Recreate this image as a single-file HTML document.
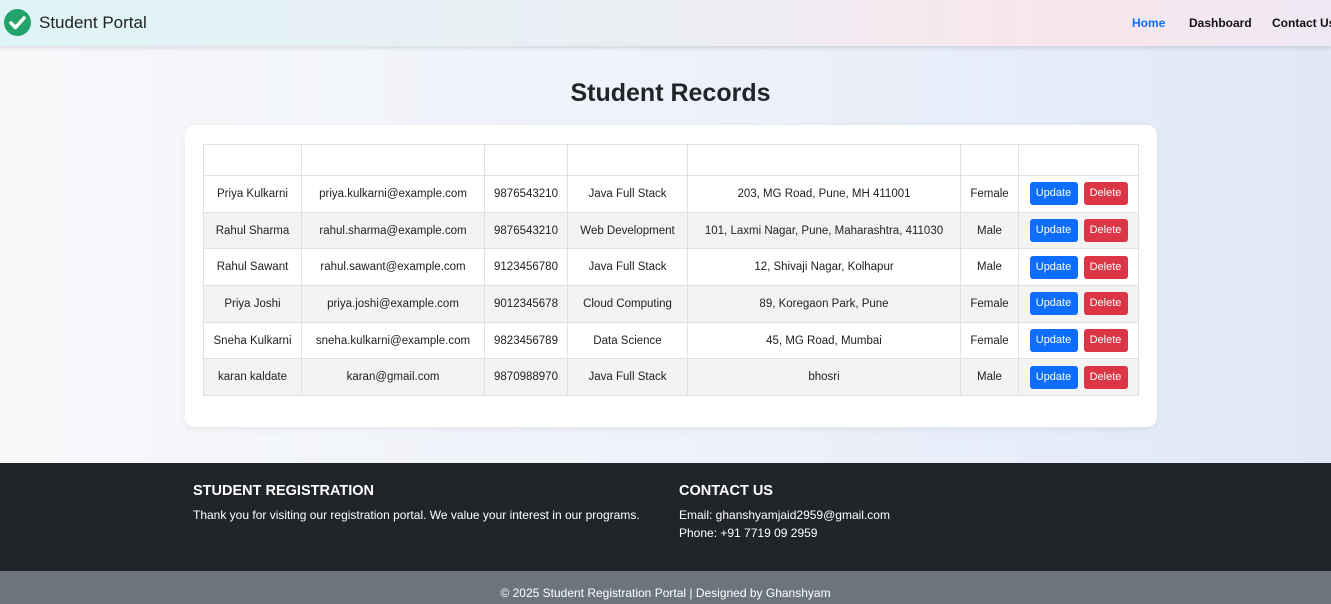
<!DOCTYPE html>
<html><head><style>
*{margin:0;padding:0;box-sizing:border-box}
body{width:1331px;height:604px;overflow:hidden;font-family:"Liberation Sans",sans-serif;background:linear-gradient(90deg,#f7f8fa 0%,#eef2fa 50%,#e0e8f8 100%);position:relative;color:#212529}
.nav{position:absolute;left:0;top:0;width:1331px;height:46px;background:linear-gradient(90deg,#e0f4f7 0%,#ebeef3 50%,#f9e6ec 80%,#efe8f4 100%);box-shadow:0 2px 4px rgba(0,0,0,.12)}
.logo{position:absolute;left:4px;top:9px;width:27px;height:27px;border-radius:50%;background:#22a36a}
.brand{position:absolute;left:39px;top:13px;font-size:17px;color:#222}
.nl{position:absolute;top:16px;font-size:12px;font-weight:bold;color:#111;white-space:nowrap}
h1{position:absolute;left:0;width:1341px;text-align:center;top:79px;font-size:25px;font-weight:bold;color:#212529}
.card{position:absolute;left:185px;top:125px;width:972px;height:302px;background:#fff;border-radius:10px;box-shadow:0 2px 8px rgba(0,0,0,.06)}
table{position:absolute;left:203px;top:144px;border-collapse:collapse;font-size:11.5px;table-layout:fixed;width:935px}
td{border:1px solid #dee2e6;text-align:center;color:#222;padding:0;white-space:nowrap}
tr{height:36.7px}
tr.h{height:31px}
tr.g td{background:#f3f3f3}
.b{display:inline-block;color:#fff;font-size:11px;border-radius:3px;padding:5px 0;width:48px;line-height:13px}
.u{background:#0d6efd}.d{background:#dc3545;width:44px;margin-left:6px}
.foot{position:absolute;left:0;top:463px;width:1331px;height:108px;background:#212529;color:#fff}
.foot h5{position:absolute;font-size:14.5px;font-weight:bold;top:20px}
.foot p{position:absolute;font-size:12px;line-height:18px}
.copy{position:absolute;left:0;top:571px;width:1331px;height:33px;background:#6c757d;color:#fff;font-size:12px;text-align:center;padding-top:15px}
</style></head><body>
<div class="nav">
<div class="logo"><svg width="27" height="27" viewBox="0 0 27 27"><path d="M7 14l4.5 4.5L20 9" stroke="#fff" stroke-width="3.5" fill="none" stroke-linecap="round" stroke-linejoin="round"/></svg></div>
<div class="brand">Student Portal</div>
<div class="nl" style="left:1132px;color:#0d6efd">Home</div>
<div class="nl" style="left:1189px">Dashboard</div>
<div class="nl" style="left:1272px">Contact Us</div>
</div>
<h1>Student Records</h1>
<div class="card"></div>
<table>
<colgroup><col style="width:98px"><col style="width:183px"><col style="width:83px"><col style="width:120px"><col style="width:273px"><col style="width:58px"><col style="width:120px"></colgroup>
<tr class="h"><td></td><td></td><td></td><td></td><td></td><td></td><td></td></tr>
<tr><td>Priya Kulkarni</td><td>priya.kulkarni@example.com</td><td>9876543210</td><td>Java Full Stack</td><td>203, MG Road, Pune, MH 411001</td><td>Female</td><td><span class="b u">Update</span><span class="b d">Delete</span></td></tr>
<tr class="g"><td>Rahul Sharma</td><td>rahul.sharma@example.com</td><td>9876543210</td><td>Web Development</td><td>101, Laxmi Nagar, Pune, Maharashtra, 411030</td><td>Male</td><td><span class="b u">Update</span><span class="b d">Delete</span></td></tr>
<tr><td>Rahul Sawant</td><td>rahul.sawant@example.com</td><td>9123456780</td><td>Java Full Stack</td><td>12, Shivaji Nagar, Kolhapur</td><td>Male</td><td><span class="b u">Update</span><span class="b d">Delete</span></td></tr>
<tr class="g"><td>Priya Joshi</td><td>priya.joshi@example.com</td><td>9012345678</td><td>Cloud Computing</td><td>89, Koregaon Park, Pune</td><td>Female</td><td><span class="b u">Update</span><span class="b d">Delete</span></td></tr>
<tr><td>Sneha Kulkarni</td><td>sneha.kulkarni@example.com</td><td>9823456789</td><td>Data Science</td><td>45, MG Road, Mumbai</td><td>Female</td><td><span class="b u">Update</span><span class="b d">Delete</span></td></tr>
<tr class="g"><td>karan kaldate</td><td>karan@gmail.com</td><td>9870988970</td><td>Java Full Stack</td><td>bhosri</td><td>Male</td><td><span class="b u">Update</span><span class="b d">Delete</span></td></tr>
</table>
<div class="foot">
<h5 style="left:193px">STUDENT REGISTRATION</h5>
<p style="left:193px;top:43px">Thank you for visiting our registration portal. We value your interest in our programs.</p>
<h5 style="left:679px">CONTACT US</h5>
<p style="left:679px;top:43px">Email: ghanshyamjaid2959@gmail.com<br>Phone: +91 7719 09 2959</p>
</div>
<div class="copy">© 2025 Student Registration Portal | Designed by Ghanshyam</div>
</body></html>
